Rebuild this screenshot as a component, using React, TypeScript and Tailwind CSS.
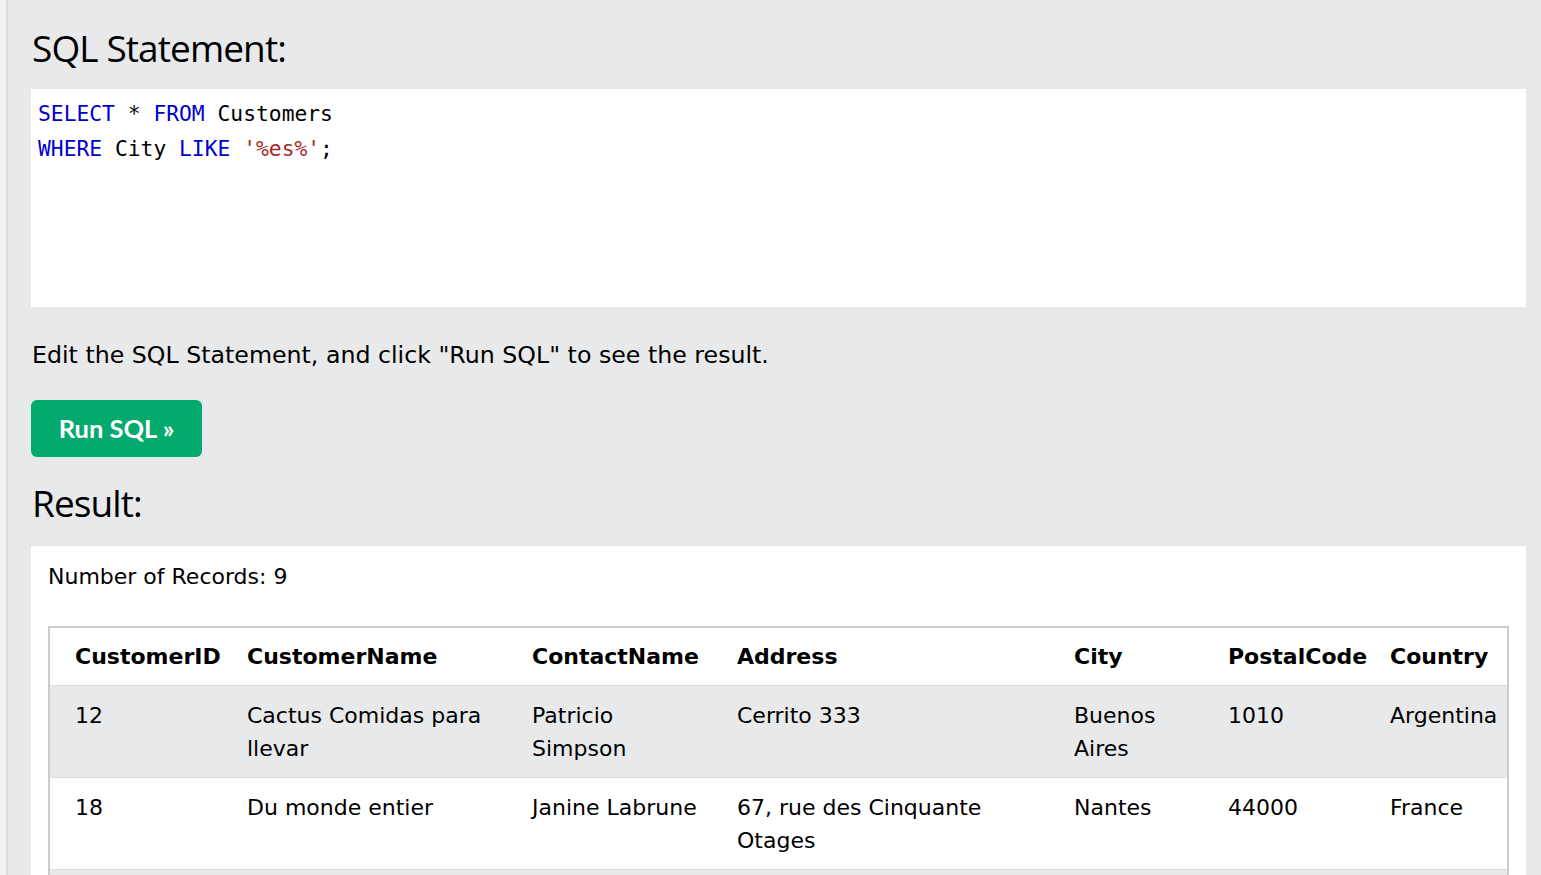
import React from "react";

// Query result rows
interface CustomerRow {
  id: string;
  name: string;
  contact: string;
  address: string;
  city: string;
  postal: string;
  country: string;
}

const rows: CustomerRow[] = [
  {
    id: "12",
    name: "Cactus Comidas para llevar",
    contact: "Patricio Simpson",
    address: "Cerrito 333",
    city: "Buenos Aires",
    postal: "1010",
    country: "Argentina",
  },
  {
    id: "18",
    name: "Du monde entier",
    contact: "Janine Labrune",
    address: "67, rue des Cinquante Otages",
    city: "Nantes",
    postal: "44000",
    country: "France",
  },
];

const headers = ["CustomerID", "CustomerName", "ContactName", "Address", "City", "PostalCode", "Country"];

const gridCols = "grid grid-cols-[172px_285px_205px_337px_154px_162px_1fr]";
const cell = "pl-[25px] pr-[10px] py-[12.5px]";

const App: React.FC = () => {
  return (
    <div className="flex h-[875px] overflow-hidden bg-white font-['DejaVu_Sans',Verdana,sans-serif] text-black">
      {/* left gutter */}
      <div className="w-[8px] shrink-0 border-r-2 border-[#dcdcdc] bg-[#f1f1f1]" />

      {/* Main area */}
      <div className="flex-1 bg-[#e7e9eb] pl-[23px] pr-[17px]">
        <h2 className="mt-[24px] ml-[1px] font-['Open_Sans',sans-serif] text-[37px] leading-[48px] tracking-[-0.9px] text-black">
          SQL Statement:
        </h2>

        {/* Code editor */}
        <div className="mt-[17px] h-[218px] bg-white px-[7px] pt-[7px] font-['DejaVu_Sans_Mono',monospace] text-[21.3px] leading-[35px]">
          <div>
            <span className="text-[#0000cd]">SELECT</span> * <span className="text-[#0000cd]">FROM</span> Customers
          </div>
          <div>
            <span className="text-[#0000cd]">WHERE</span> City <span className="text-[#0000cd]">LIKE</span>{" "}
            <span className="text-[#a52a2a]">'%es%'</span>;
          </div>
        </div>

        <p className="mt-[32px] ml-[1px] text-[23.7px] leading-[32px]">
          Edit the SQL Statement, and click "Run SQL" to see the result.
        </p>

        <button className="mt-[29px] h-[57px] w-[171px] rounded-[6px] bg-[#04aa6d] font-['Lato',sans-serif] text-[25.5px] font-bold text-white">
          Run SQL »
        </button>

        <h2 className="mt-[22px] ml-[1px] font-['Open_Sans',sans-serif] text-[37px] leading-[48px] tracking-[-0.9px]">
          Result:
        </h2>

        {/* Result panel */}
        <div className="mt-[19px] bg-white px-[17px] pb-[20px] pt-[16px]">
          <div className="text-[22px] leading-[30px]">Number of Records: 9</div>

          <div className="mt-[34px] border-2 border-b-0 border-[#cccccc] text-[22px] leading-[33px]">
            <div className={`${gridCols} border-b border-[#dddddd] font-bold`}>
              {headers.map((h) => (
                <div key={h} className="whitespace-nowrap py-[12px] pl-[25px] pr-[10px]">
                  {h}
                </div>
              ))}
            </div>
            {rows.map((r, i) => (
              <div
                key={r.id}
                className={`${gridCols} border-b border-[#dddddd] ${i % 2 === 0 ? "bg-[#e7e9eb]" : "bg-white"}`}
              >
                <div className={cell}>{r.id}</div>
                <div className={cell}>{r.name}</div>
                <div className={cell}>{r.contact}</div>
                <div className={cell}>{r.address}</div>
                <div className={cell}>{r.city}</div>
                <div className={cell}>{r.postal}</div>
                <div className={cell}>{r.country}</div>
              </div>
            ))}
            {/* next row, just starting below the fold */}
            <div className="h-[40px] bg-[#e7e9eb]" />
          </div>
        </div>
      </div>

      {/* right gutter */}
      <div className="w-px shrink-0 bg-white" />
    </div>
  );
};

export default App;
